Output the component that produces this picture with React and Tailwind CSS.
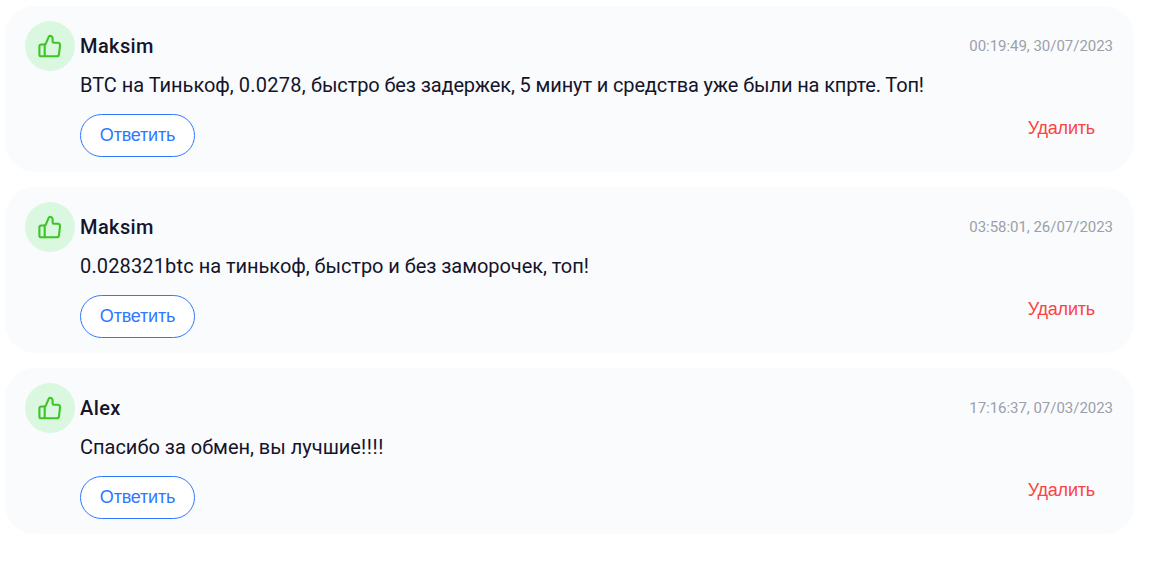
const reviews = [
  {
    id: 1,
    name: "Maksim",
    date: "00:19:49, 30/07/2023",
    parts: [
      { text: "BTC на Тинькоф, ", tracking: "tracking-[-0.02px]" },
      { text: "0.0278, ", tracking: "tracking-[0.24px]" },
      { text: "быстро без задержек, 5 минут и средства уже были на кпрте. Топ!", tracking: "tracking-[-0.13px]" },
    ],
  },
  {
    id: 2,
    name: "Maksim",
    date: "03:58:01, 26/07/2023",
    parts: [
      { text: "0.028321btc ", tracking: "tracking-[0.14px]" },
      { text: "на тинькоф, быстро и без заморочек, топ!", tracking: "tracking-[-0.06px]" },
    ],
  },
  {
    id: 3,
    name: "Alex",
    date: "17:16:37, 07/03/2023",
    parts: [
      { text: "Спасибо за обмен, вы лучшие", tracking: "tracking-[-0.01px]" },
      { text: "!!!!", tracking: "tracking-[0.6px]" },
    ],
  },
];

function LikeIcon() {
  return (
    <svg width="24" height="24" viewBox="0 0 24 24" fill="none" stroke="#3dc427" strokeWidth="2.1" strokeLinecap="round" strokeLinejoin="round">
      <path d="M6.7 10.5v11.8" />
      <path d="M3.3 10.5h3.4c.5 0 .8-.2 1-.6l3.1-7.2c.7-1.6 3.8-.8 3.8 1.5v3.4c0 .8.4 1.2 1.2 1.2h3.9c1.6 0 2.5 1 2.3 2.5l-1 9c-.2 1.3-1 2-2.3 2H3.3c-1.1 0-1.9-.8-1.9-1.9v-8c0-1.1.8-1.9 1.9-1.9z" />
    </svg>
  );
}

function Review({ review }) {
  return (
    <article className="flex h-[166px] rounded-[30px] bg-[#fafbfd] pt-[15px] pr-[21px] pl-5">
      <div className="flex size-[50px] shrink-0 items-center justify-center rounded-full bg-[#d9f8df]">
        <LikeIcon />
      </div>

      <div className="ml-[5px] flex-1">
        <div className="flex h-[50px] items-center justify-between">
          <h3 className="text-xl font-medium tracking-[0.4px]">{review.name}</h3>
          <time className="text-[15px] tracking-[-0.03px] text-[#9c9fa9]">{review.date}</time>
        </div>

        <p className="-mt-px text-xl leading-[30px]">
          {review.parts.map((part) => (
            <span key={part.text} className={part.tracking}>{part.text}</span>
          ))}
        </p>

        <div className="mt-3.5 flex items-start justify-between font-['Liberation_Sans',sans-serif] text-lg tracking-[-0.2px]">
          <button className="h-[43px] w-[115px] rounded-full border border-[#2f78ff] bg-white pb-0.5 text-[#2f78ff]">
            Ответить
          </button>
          <button className="mr-[18px] text-[#fa4444]">Удалить</button>
        </div>
      </div>
    </article>
  );
}

export default function App() {
  return (
    <main className="flex min-h-screen flex-col gap-[15px] bg-white pt-1.5 pr-[21px] pl-[5px] font-[Roboto,sans-serif] text-[#14142b]">
      {reviews.map((review) => (
        <Review key={review.id} review={review} />
      ))}
    </main>
  );
}
